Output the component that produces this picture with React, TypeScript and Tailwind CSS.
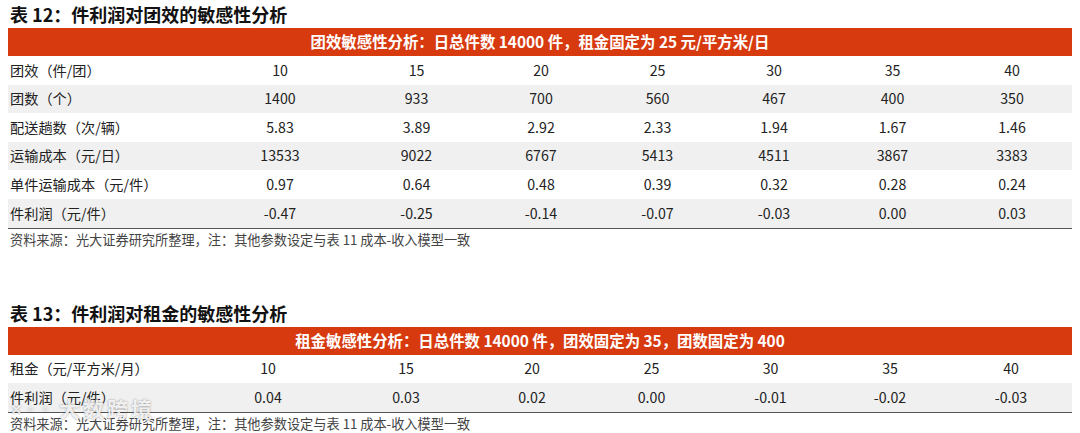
const font = { fontFamily: '"Noto Sans CJK SC", "Noto Sans", sans-serif' };

type Row = { label: string; values: string[] };

const t12: Row[] = [
  { label: "团效（件/团）", values: ["10", "15", "20", "25", "30", "35", "40"] },
  { label: "团数（个）", values: ["1400", "933", "700", "560", "467", "400", "350"] },
  { label: "配送趟数（次/辆）", values: ["5.83", "3.89", "2.92", "2.33", "1.94", "1.67", "1.46"] },
  { label: "运输成本（元/日）", values: ["13533", "9022", "6767", "5413", "4511", "3867", "3383"] },
  { label: "单件运输成本（元/件）", values: ["0.97", "0.64", "0.48", "0.39", "0.32", "0.28", "0.24"] },
  { label: "件利润（元/件）", values: ["-0.47", "-0.25", "-0.14", "-0.07", "-0.03", "0.00", "0.03"] },
];

const t13: Row[] = [
  { label: "租金（元/平方米/月）", values: ["10", "15", "20", "25", "30", "35", "40"] },
  { label: "件利润（元/件）", values: ["0.04", "0.03", "0.02", "0.00", "-0.01", "-0.02", "-0.03"] },
];

function Table({
  title,
  header,
  rows,
  cols,
}: {
  title: string;
  header: string;
  rows: Row[];
  cols: string;
}) {
  return (
    <div>
      <h2 className="h-[28px] pl-[2px] pt-[1px] text-[18px] font-bold leading-[26px] text-[#111]">{title}</h2>
      <div className="flex h-[28px] items-center justify-center bg-[#d83a10] text-[15.4px] font-bold text-white">
        {header}
      </div>
      <div className="border-b-[1.5px] border-[#555]">
        {rows.map((r, i) => (
          <div
            key={r.label}
            className={`grid h-[28.6px] items-center text-[14.2px] text-[#222] ${cols} ${
              i % 2 === 1 ? "bg-[#f0f0f0]" : "bg-white"
            }`}
          >
            <div className="pl-[2px]">{r.label}</div>
            {r.values.map((v, j) => (
              <div key={j} className="text-center">
                {v}
              </div>
            ))}
          </div>
        ))}
      </div>
      <p className="pl-[2px] pt-[2px] text-[13.2px] leading-[18px] text-[#444]">
        资料来源：光大证券研究所整理，注：其他参数设定与表 11 成本-收入模型一致
      </p>
    </div>
  );
}

export default function App() {
  return (
    <div className="relative h-[433px] w-[1080px] overflow-hidden bg-white pl-[8px] pr-[8px]" style={font}>
      <Table
        title="表 12：件利润对团效的敏感性分析"
        header="团效敏感性分析：日总件数 14000 件，租金固定为 25 元/平方米/日"
        rows={t12}
        cols="grid-cols-[201px_142px_131px_118px_115px_118px_119px_120px]"
      />
      <div className="h-[50px]" />
      <Table
        title="表 13：件利润对租金的敏感性分析"
        header="租金敏感性分析：日总件数 14000 件，团效固定为 35，团数固定为 400"
        rows={t13}
        cols="grid-cols-[188px_144px_132px_120px_119px_119px_120px_122px]"
      />
      <div className="absolute left-[10px] top-[398px] flex items-center gap-[6px] text-[21px] font-bold leading-none text-white/85 [text-shadow:0_0_2px_rgba(0,0,0,0.45)]">
        <span className="text-[15px] font-normal">✕◦◦</span>
        <span className="tracking-[3px]">大数跨境</span>
      </div>
    </div>
  );
}
